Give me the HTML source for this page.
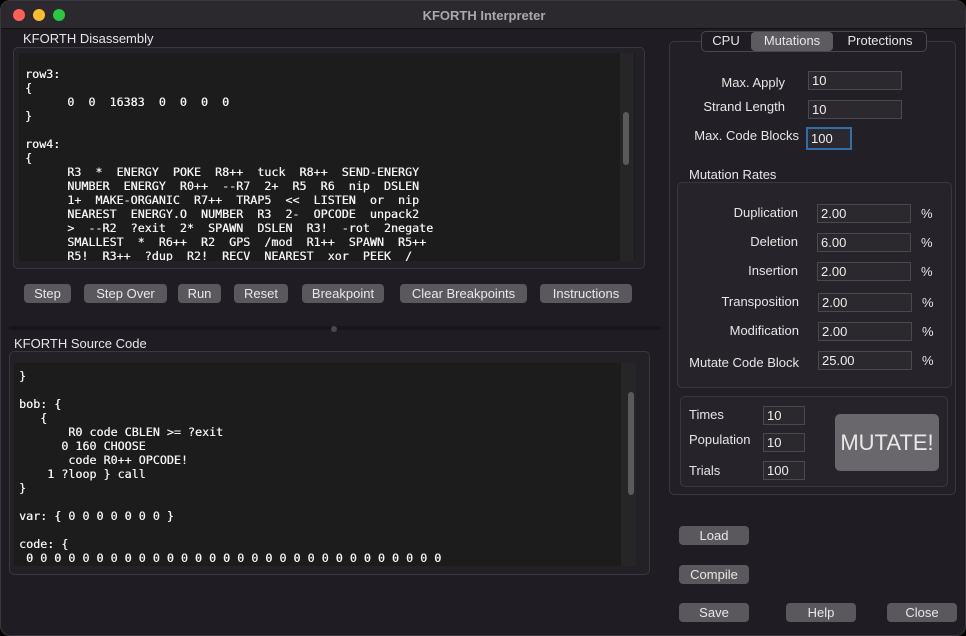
<!DOCTYPE html>
<html><head><meta charset="utf-8"><style>
*{margin:0;padding:0;box-sizing:border-box}
body{width:966px;height:636px;background:#000;overflow:hidden;font-family:"Liberation Sans",sans-serif;color:#e6e6e6;font-size:13px;position:relative}
.win{position:absolute;left:0;top:0;width:966px;height:636px;background:#1f1d23;border-radius:10px;overflow:hidden;border:1px solid #3a383e}
.tb{position:absolute;left:0;top:0;width:966px;height:28px;background:#2b292e;border-bottom:1px solid #111}
.dot{position:absolute;top:8px;width:12px;height:12px;border-radius:50%}
.a{position:absolute;white-space:pre}
.box{position:absolute;border:1px solid #3a383e;border-radius:5px;background:#232126}
.ta{position:absolute;background:#1c1c1c;overflow:hidden}
.mono{font-family:"DejaVu Sans Mono",monospace;font-size:11.7px;line-height:14px;color:#f4f4f4;white-space:pre;position:absolute;text-shadow:0.3px 0 0 #f4f4f4}
.btn{position:absolute;background:#5a585d;border-radius:4px;height:19px;line-height:19px;text-align:center;color:#e8e8e8;font-size:13px}
.inp{position:absolute;background:#2b292e;border:1px solid #4b494f;height:19px;line-height:17px;padding-left:3px;font-size:13px;color:#eee}
.lbl{position:absolute;text-align:right;font-size:13px;line-height:16px}
.thumb{position:absolute;background:#5a5a5a;border-radius:3px;width:6px}
.track{position:absolute;background:#262626}
</style></head><body><div class="win">
<div class="tb">
<div class="dot" style="left:12px;background:#fe5f57"></div>
<div class="dot" style="left:32px;background:#febc2e"></div>
<div class="dot" style="left:52px;background:#28c840"></div>
<div class="a" style="left:0;width:966px;text-align:center;top:7px;font-weight:bold;color:#a9a8ab;font-size:13px">KFORTH Interpreter</div>
</div>

<div class="a" style="left:22px;top:30px">KFORTH Disassembly</div>
<div class="box" style="left:12px;top:46px;width:632px;height:222px"></div>
<div class="ta" style="left:18px;top:52px;width:616px;height:208px">
<div class="track" style="left:601px;top:0;width:14px;height:208px"></div>
<div class="thumb" style="left:604px;top:59px;height:53px"></div>
<div class="mono" style="left:6px;top:14px">row3:
{
      0  0  16383  0  0  0  0
}

row4:
{
      R3  *  ENERGY  POKE  R8++  tuck  R8++  SEND-ENERGY
      NUMBER  ENERGY  R0++  --R7  2+  R5  R6  nip  DSLEN
      1+  MAKE-ORGANIC  R7++  TRAP5  <<  LISTEN  or  nip
      NEAREST  ENERGY.O  NUMBER  R3  2-  OPCODE  unpack2
      >  --R2  ?exit  2*  SPAWN  DSLEN  R3!  -rot  2negate
      SMALLEST  *  R6++  R2  GPS  /mod  R1++  SPAWN  R5++
      R5!  R3++  ?dup  R2!  RECV  NEAREST  xor  PEEK  /</div>
</div>

<div class="btn" style="left:23px;top:283px;width:47px">Step</div>
<div class="btn" style="left:83px;top:283px;width:83px">Step Over</div>
<div class="btn" style="left:177px;top:283px;width:43px">Run</div>
<div class="btn" style="left:233px;top:283px;width:54px">Reset</div>
<div class="btn" style="left:301px;top:283px;width:82px">Breakpoint</div>
<div class="btn" style="left:399px;top:283px;width:127px">Clear Breakpoints</div>
<div class="btn" style="left:539px;top:283px;width:92px">Instructions</div>

<div class="a" style="left:8px;top:325px;width:652px;height:4px;background:#18161b"></div>
<div class="a" style="left:330px;top:325px;width:6px;height:6px;border-radius:3px;background:#4a484e"></div>

<div class="a" style="left:13px;top:335px">KFORTH Source Code</div>
<div class="box" style="left:8px;top:350px;width:641px;height:224px"></div>
<div class="ta" style="left:13px;top:362px;width:622px;height:203px">
<div class="track" style="left:607px;top:0;width:15px;height:203px"></div>
<div class="thumb" style="left:614px;top:29px;height:103px"></div>
<div class="mono" style="left:5px;top:6px">}

bob: {
   {
       R0 code CBLEN >= ?exit
      0 160 CHOOSE
       code R0++ OPCODE!
    1 ?loop } call
}

var: { 0 0 0 0 0 0 0 }

code: {
 0 0 0 0 0 0 0 0 0 0 0 0 0 0 0 0 0 0 0 0 0 0 0 0 0 0 0 0 0 0</div>
</div>

<!-- right -->
<div class="box" style="left:668px;top:40px;width:287px;height:454px;background:#222026"></div>
<div class="a" style="left:700px;top:30px;width:226px;height:21px;border:1px solid #4a484e;border-radius:5px;background:#1f1d23"></div>
<div class="a" style="left:750px;top:31px;width:82px;height:19px;background:#5d5b60;border-radius:4px"></div>
<div class="a" style="left:700px;top:32px;width:50px;text-align:center">CPU</div>
<div class="a" style="left:750px;top:32px;width:82px;text-align:center">Mutations</div>
<div class="a" style="left:832px;top:32px;width:94px;text-align:center">Protections</div>

<div class="lbl" style="left:660px;width:124px;top:74px">Max. Apply</div>
<div class="inp" style="left:807px;top:70px;width:94px">10</div>
<div class="lbl" style="left:660px;width:124px;top:98px">Strand Length</div>
<div class="inp" style="left:807px;top:99px;width:94px">10</div>
<div class="lbl" style="left:660px;width:138px;top:127px">Max. Code Blocks</div>
<div class="inp" style="left:805px;top:126px;width:46px;height:23px;line-height:19px;border:2px solid #2f6fae">100</div>

<div class="a" style="left:688px;top:166px">Mutation Rates</div>
<div class="box" style="left:676px;top:181px;width:275px;height:206px;background:#26242a"></div>
<div class="lbl" style="left:660px;width:137px;top:204px">Duplication</div>
<div class="inp" style="left:816px;top:203px;width:94px">2.00</div><div class="a" style="left:920px;top:205px">%</div>
<div class="lbl" style="left:660px;width:137px;top:233px">Deletion</div>
<div class="inp" style="left:816px;top:232px;width:94px">6.00</div><div class="a" style="left:920px;top:234px">%</div>
<div class="lbl" style="left:660px;width:137px;top:262px">Insertion</div>
<div class="inp" style="left:816px;top:261px;width:94px">2.00</div><div class="a" style="left:920px;top:263px">%</div>
<div class="lbl" style="left:660px;width:138px;top:293px">Transposition</div>
<div class="inp" style="left:817px;top:292px;width:94px">2.00</div><div class="a" style="left:921px;top:294px">%</div>
<div class="lbl" style="left:660px;width:138px;top:322px">Modification</div>
<div class="inp" style="left:817px;top:321px;width:94px">2.00</div><div class="a" style="left:921px;top:323px">%</div>
<div class="lbl" style="left:660px;width:138px;top:354px">Mutate Code Block</div>
<div class="inp" style="left:817px;top:350px;width:94px">25.00</div><div class="a" style="left:921px;top:352px">%</div>

<div class="box" style="left:679px;top:395px;width:268px;height:91px;background:#26242a"></div>
<div class="a" style="left:688px;top:406px">Times</div>
<div class="inp" style="left:762px;top:405px;width:42px">10</div>
<div class="a" style="left:688px;top:431px">Population</div>
<div class="inp" style="left:762px;top:432px;width:42px">10</div>
<div class="a" style="left:688px;top:462px">Trials</div>
<div class="inp" style="left:762px;top:460px;width:42px">100</div>
<div class="btn" style="left:834px;top:413px;width:104px;height:57px;line-height:57px;font-size:22px;background:#69676c;border-radius:5px">MUTATE!</div>

<div class="btn" style="left:678px;top:525px;width:70px">Load</div>
<div class="btn" style="left:678px;top:564px;width:70px">Compile</div>
<div class="btn" style="left:678px;top:602px;width:70px">Save</div>
<div class="btn" style="left:785px;top:602px;width:70px">Help</div>
<div class="btn" style="left:886px;top:602px;width:70px">Close</div>
</div></body></html>
